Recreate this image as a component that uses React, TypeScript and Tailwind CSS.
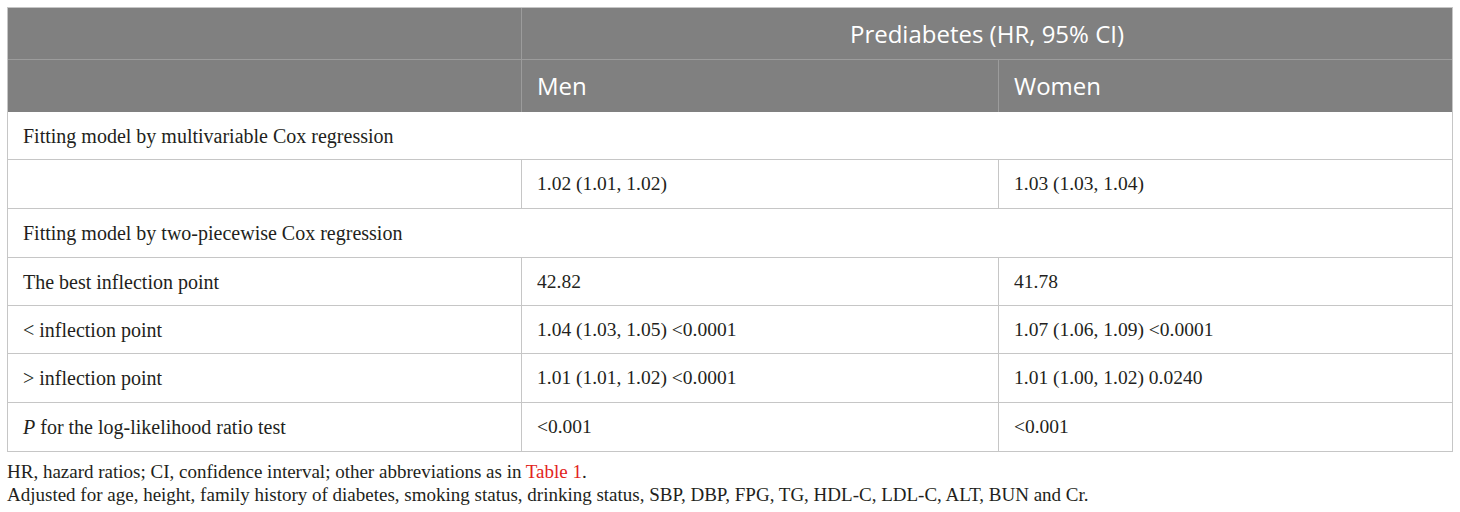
const rows: { label: React.ReactNode; men?: string; women?: string; span?: boolean; h: string }[] = [
  { label: "Fitting model by multivariable Cox regression", span: true, h: "h-[48px]" },
  { label: "", men: "1.02 (1.01, 1.02)", women: "1.03 (1.03, 1.04)", h: "h-[49px]" },
  { label: "Fitting model by two-piecewise Cox regression", span: true, h: "h-[49px]" },
  { label: "The best inflection point", men: "42.82", women: "41.78", h: "h-[48px]" },
  { label: "< inflection point", men: "1.04 (1.03, 1.05) <0.0001", women: "1.07 (1.06, 1.09) <0.0001", h: "h-[48px]" },
  { label: "> inflection point", men: "1.01 (1.01, 1.02) <0.0001", women: "1.01 (1.00, 1.02) 0.0240", h: "h-[49px]" },
  {
    label: (
      <span>
        <i>P</i> for the log-likelihood ratio test
      </span>
    ),
    men: "<0.001",
    women: "<0.001",
    h: "h-[48px]",
  },
];

export default function App() {
  return (
    <div className="min-h-[512px] w-[1460px] bg-white p-[7px] font-['Liberation_Serif',serif] text-[#231f20]">
      {/* Table */}
      <div className="w-[1446px] border border-[#c6c6c6]">
        {/* Header */}
        <div className="bg-[#808080] font-['Open_Sans',sans-serif] text-[24px] text-white">
          <div className="flex h-[52px] border-b border-[#9c9c9c]">
            <div className="w-[514px] border-r border-[#9c9c9c]" />
            <div className="flex flex-1 items-center justify-center">Prediabetes (HR, 95% CI)</div>
          </div>
          <div className="flex h-[52px]">
            <div className="w-[514px] border-r border-[#9c9c9c]" />
            <div className="flex w-[477px] items-center border-r border-[#9c9c9c] pl-[15px]">Men</div>
            <div className="flex flex-1 items-center pl-[15px]">Women</div>
          </div>
        </div>

        {/* Body */}
        {rows.map((row, i) => (
          <div
            key={i}
            className={`flex text-[20px] ${row.h} ${i < rows.length - 1 ? "border-b border-[#c6c6c6]" : ""}`}
          >
            {row.span ? (
              <div className="flex flex-1 items-center pl-[15px]">{row.label}</div>
            ) : (
              <>
                <div className="flex w-[514px] items-center border-r border-[#c6c6c6] pl-[15px]">{row.label}</div>
                <div className="flex w-[477px] items-center border-r border-[#c6c6c6] pl-[15px] text-[19.5px]">
                  {row.men}
                </div>
                <div className="flex flex-1 items-center pl-[15px] text-[19.5px]">{row.women}</div>
              </>
            )}
          </div>
        ))}
      </div>

      {/* Notes */}
      <div className="mt-[8px] text-[19px] leading-[23px]">
        <p>
          HR, hazard ratios; CI, confidence interval; other abbreviations as in{" "}
          <span className="text-[#e2231a]">Table 1</span>.
        </p>
        <p>
          Adjusted for age, height, family history of diabetes, smoking status, drinking status, SBP, DBP, FPG, TG,
          HDL-C, LDL-C, ALT, BUN and Cr.
        </p>
      </div>
    </div>
  );
}
